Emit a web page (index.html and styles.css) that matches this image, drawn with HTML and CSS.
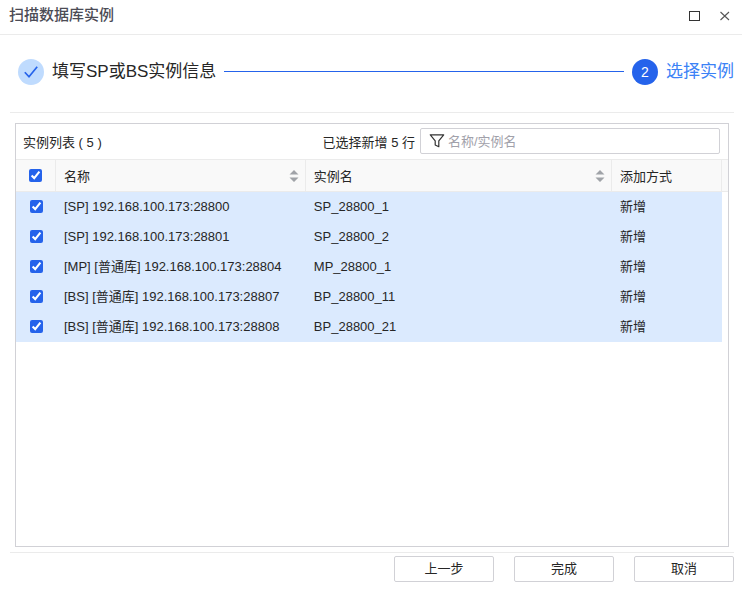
FILE: index.html
```html
<!DOCTYPE html>
<html lang="zh-CN">
<head>
    <meta charset="UTF-8">
    <meta name="viewport" content="width=device-width, initial-scale=1.0">
    <title>扫描数据库实例</title>
    <link rel="stylesheet" href="styles.css">
</head>
<body>
    <header class="dialog-header">
        <h1 class="dialog-title">扫描数据库实例</h1>
        <div class="window-tools">
            <button type="button" class="tool-btn" aria-label="最大化">
                <svg width="12" height="12" viewBox="0 0 12 12"><rect x="0.5" y="1.5" width="10" height="9" fill="none" stroke="#333"/></svg>
            </button>
            <button type="button" class="tool-btn" aria-label="关闭">
                <svg width="12" height="12" viewBox="0 0 12 12"><path d="M1.5 2l8.5 8M10 2l-8.5 8" fill="none" stroke="#555" stroke-width="1.1"/></svg>
            </button>
        </div>
    </header>
    <main class="dialog-body">
        <div class="steps">
            <span class="step-icon done">
                <svg width="16" height="16" viewBox="0 0 16 16"><path d="M1.8 8.2l4.2 4.6L14.2 2.8" fill="none" stroke="#2563eb" stroke-width="1.7"/></svg>
            </span>
            <span class="step-title">填写SP或BS实例信息</span>
            <span class="step-line"></span>
            <span class="step-icon current">2</span>
            <span class="step-title active">选择实例</span>
        </div>
        <section class="panel">
            <div class="panel-bar">
                <span class="panel-title">实例列表 ( 5 )</span>
                <label for="filter">已选择新增 5 行</label>
                <div class="search-box">
                    <svg width="16" height="14" viewBox="0 0 16 14"><path d="M1.3 0.8h13.4L9.8 6.8v5.9L6.2 11V6.8z" fill="none" stroke="#333" stroke-width="1.2" stroke-linejoin="round"/></svg>
                    <input type="text" id="filter" placeholder="名称/实例名">
                </div>
            </div>
            <table class="instance-table">
                <colgroup>
                    <col class="col-check">
                    <col class="col-name">
                    <col class="col-instance">
                    <col class="col-mode">
                    <col class="col-gutter">
                </colgroup>
                <thead>
                    <tr>
                        <th scope="col" class="check"><input type="checkbox" aria-label="全选" checked></th>
                        <th scope="col">
                            <div class="th-inner">名称
                                <svg class="sort" width="10" height="12" viewBox="0 0 10 12"><path d="M5 0l4.5 4.6h-9zM5 12L.5 7.4h9z" fill="#a0a3a8"/></svg>
                            </div>
                        </th>
                        <th scope="col">
                            <div class="th-inner">实例名
                                <svg class="sort" width="10" height="12" viewBox="0 0 10 12"><path d="M5 0l4.5 4.6h-9zM5 12L.5 7.4h9z" fill="#a0a3a8"/></svg>
                            </div>
                        </th>
                        <th scope="col">添加方式</th>
                        <td class="gutter"></td>
                    </tr>
                </thead>
                <tbody>
                    <tr>
                        <td class="check"><input type="checkbox" aria-label="SP_28800_1" checked></td>
                        <td>[SP] 192.168.100.173:28800</td>
                        <td>SP_28800_1</td>
                        <td>新增</td>
                    </tr>
                    <tr>
                        <td class="check"><input type="checkbox" aria-label="SP_28800_2" checked></td>
                        <td>[SP] 192.168.100.173:28801</td>
                        <td>SP_28800_2</td>
                        <td>新增</td>
                    </tr>
                    <tr>
                        <td class="check"><input type="checkbox" aria-label="MP_28800_1" checked></td>
                        <td>[MP] [普通库] 192.168.100.173:28804</td>
                        <td>MP_28800_1</td>
                        <td>新增</td>
                    </tr>
                    <tr>
                        <td class="check"><input type="checkbox" aria-label="BP_28800_11" checked></td>
                        <td>[BS] [普通库] 192.168.100.173:28807</td>
                        <td>BP_28800_11</td>
                        <td>新增</td>
                    </tr>
                    <tr>
                        <td class="check"><input type="checkbox" aria-label="BP_28800_21" checked></td>
                        <td>[BS] [普通库] 192.168.100.173:28808</td>
                        <td>BP_28800_21</td>
                        <td>新增</td>
                    </tr>
                </tbody>
            </table>
        </section>
        <footer class="dialog-footer">
            <button type="button" class="btn">上一步</button>
            <button type="button" class="btn">完成</button>
            <button type="button" class="btn">取消</button>
        </footer>
    </main>
</body>
</html>
```

FILE: styles.css
```css
* {
    box-sizing: border-box;
}

body {
    margin: 0;
    min-height: 100vh;
    display: flex;
    flex-direction: column;
    background: #fff;
    color: #262626;
    font-family: "Liberation Sans", "Noto Sans CJK SC", sans-serif;
    font-size: 13px;
}

button,
input {
    font-family: inherit;
    font-size: 13px;
}

/* Title bar */
.dialog-header {
    display: flex;
    align-items: center;
    justify-content: space-between;
    height: 35px;
    padding: 0 8px 2px 9px;
    border-bottom: 1px solid #ebebeb;
}

.dialog-title {
    margin: 0;
    padding-bottom: 3px;
    font-size: 15px;
    line-height: 22px;
    font-weight: 500;
    color: #4b4b55;
}

.window-tools {
    display: flex;
    gap: 12px;
}

.tool-btn {
    display: flex;
    align-items: center;
    justify-content: center;
    width: 18px;
    height: 18px;
    padding: 0;
    border: 0;
    background: none;
}

.dialog-body {
    flex: 1;
    display: flex;
    flex-direction: column;
    padding: 0 8px 8px 10px;
}

/* Steps */
.steps {
    display: flex;
    align-items: center;
    gap: 8px;
    height: 78px;
    padding: 0 0 4px 8px;
    border-bottom: 1px solid #ebebeb;
    white-space: nowrap;
}

.step-icon {
    display: flex;
    align-items: center;
    justify-content: center;
    width: 26px;
    height: 26px;
    border-radius: 50%;
    font-size: 14px;
}

.step-icon.done {
    background: #bfdbfe;
}

.step-icon.current {
    background: #2563eb;
    color: #fff;
}

.step-title {
    font-size: 17px;
    line-height: 26px;
}

.step-title.active {
    color: #3b82f6;
}

.step-line {
    flex: 1;
    border-top: 1px solid #2563eb;
}

/* Instance list */
.panel {
    flex: 1;
    margin: 10px 5px 5px;
    border: 1px solid #d1d1d6;
}

.panel-bar {
    display: flex;
    align-items: center;
    gap: 5px;
    height: 35px;
    padding: 0 8px 1px 7px;
}

.panel-title {
    flex: 1;
}

.search-box {
    display: flex;
    align-items: center;
    gap: 3px;
    width: 300px;
    height: 26px;
    padding: 0 8px;
    border: 1px solid #d1d1d6;
    border-radius: 2px;
}

.search-box input {
    flex: 1;
    min-width: 0;
    padding: 0;
    border: 0;
    outline: none;
    background: none;
}

.search-box input::placeholder {
    color: #a1a1aa;
}

.instance-table {
    width: 100%;
    table-layout: fixed;
    border-collapse: separate;
    border-spacing: 0;
}

.col-check {
    width: 40px;
}

.col-instance {
    width: 43%;
}

.col-mode {
    width: 110px;
}

.col-gutter {
    width: 6px;
}

.instance-table th,
.instance-table td {
    padding: 0 8px;
    text-align: left;
    font-weight: normal;
}

.instance-table th,
.instance-table .gutter {
    height: 33px;
    background: #f9f9f9;
    border-top: 1px solid #ebebeb;
    border-bottom: 1px solid #ebebeb;
}

.instance-table th {
    border-right: 1px solid #ebebeb;
}

.instance-table .gutter {
    padding: 0;
}

.instance-table tbody td {
    height: 30px;
    line-height: 20px;
    background: #dbeafe;
}

.instance-table .check {
    padding: 0;
    text-align: center;
}

.instance-table tbody .check {
    padding-bottom: 2px;
}

.instance-table input {
    display: block;
    width: 13px;
    height: 13px;
    margin: 0 auto;
    accent-color: #2563eb;
}

.th-inner {
    display: flex;
    align-items: center;
    justify-content: space-between;
}

.sort {
    margin-right: -2px;
}

/* Footer */
.dialog-footer {
    display: flex;
    justify-content: flex-end;
    gap: 20px;
    padding-top: 3px;
    border-top: 1px solid #ebebeb;
}

.btn {
    width: 100px;
    height: 26px;
    padding: 0 0 3px;
    border: 1px solid #d1d1d6;
    border-radius: 2px;
    background: #fff;
    color: #262626;
}
```
